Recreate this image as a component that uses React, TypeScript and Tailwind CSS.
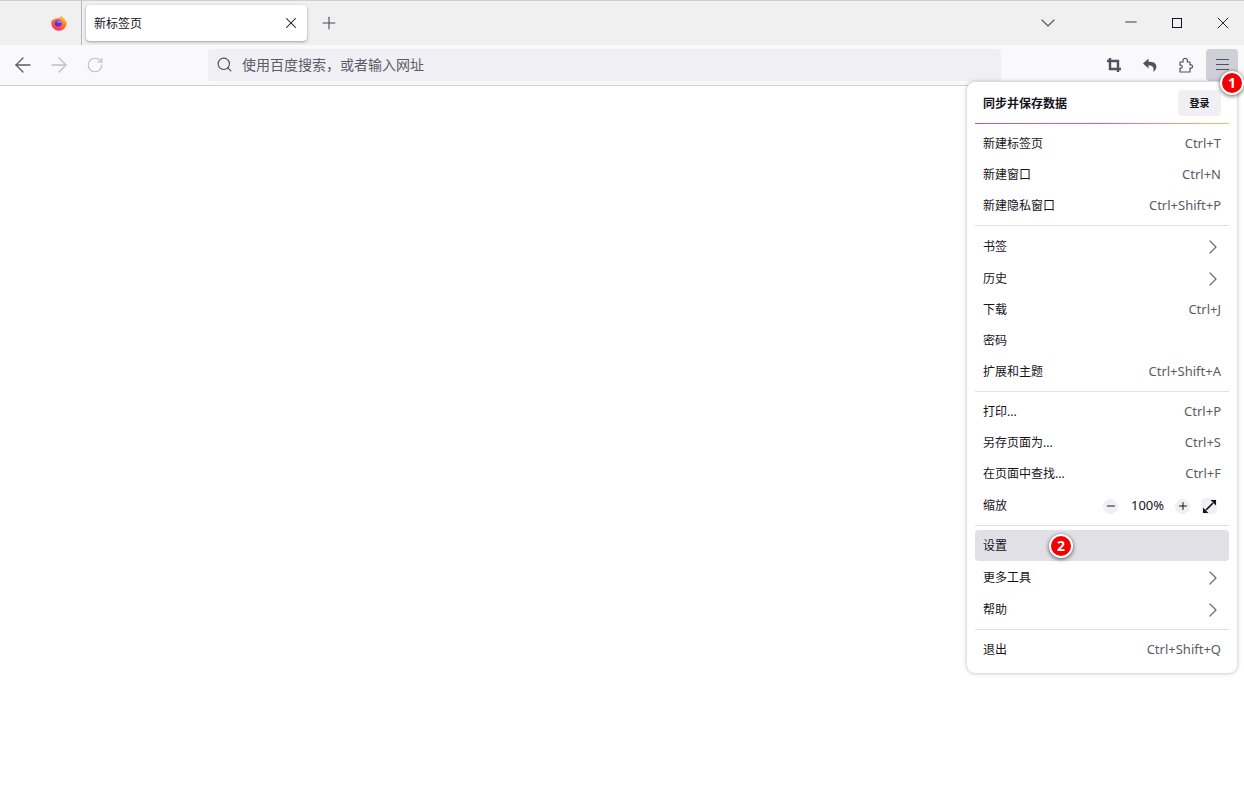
import { ArrowLeft, ArrowRight, ChevronDown, ChevronRight, Minus, Plus, RotateCw, Search, X } from "lucide-react";

const font = "[font-family:'Noto_Sans','Noto_Sans_CJK_SC',sans-serif]";

function Firefox() {
  return (
    <svg width="16" height="16" viewBox="0 0 16 16">
      <defs>
        <linearGradient id="ff" x1="0.8" y1="0" x2="0.3" y2="1">
          <stop offset="0" stopColor="#ffdc3c" />
          <stop offset="0.4" stopColor="#ff8a26" />
          <stop offset="1" stopColor="#f5246e" />
        </linearGradient>
        <linearGradient id="ffc" x1="0.7" y1="0" x2="0.3" y2="1">
          <stop offset="0" stopColor="#8a3fe0" />
          <stop offset="1" stopColor="#5a2bb8" />
        </linearGradient>
      </defs>
      <path d="M10.500 0.300c.2 1.500 1.700 2.200 2.900 3.600 1.300 1.400 2.300 2.900 2.300 4.300a7.700 7.700 0 1 1-15.300-1.300c.2-1 .5-1.800 1-2.500.2.400.3.700.4 1 .6-1 1.600-1.700 2.800-1.900 2.400-.4 5-.7 5.900-3.200z" fill="url(#ff)" />
      <circle cx="7.300" cy="8" r="3.600" fill="url(#ffc)" />
      <path d="M5 5.700h4.500c1 .7 1.400 1.500 1.400 2.300-1-.5-1.800-.6-2.900-.5z" fill="#c77dff" />
    </svg>
  );
}

function Crop() {
  return (
    <svg width="16" height="16" viewBox="0 0 16 16" fill="none" stroke="#52525e" strokeWidth="2.4">
      <path d="M4 1v11h11" />
      <path d="M1 4h11v11" />
    </svg>
  );
}

function Undo() {
  return (
    <svg width="16" height="16" viewBox="0 0 16 16">
      <path d="M6.500 1.500 1 6.500l5.500 5V8.300c2.600 0 4.400.6 5 3.200.2 1 .1 2.400-.3 3.500 2.700-2 3.600-4.500 3-6.800C13.500 5.500 10.500 4.600 6.500 4.700z" fill="#52525e" />
    </svg>
  );
}

function Puzzle() {
  return (
    <svg width="16" height="16" viewBox="0 0 16 16" fill="none" stroke="#52525e" strokeWidth="1.2" strokeLinejoin="round">
      <path d="M2 15v-4c1.300.4 2.200-.4 2.200-1.400S3.300 7.800 2 8.200V5h3.200c-.7-1.600 0-3.700 2-3.700s2.700 2.100 2 3.700H12v3c1.200-.6 2.500.1 2.500 1.500S13.200 11.700 12 11v4z" />
    </svg>
  );
}

function Sep() {
  return <div className="mx-2 my-[4px] h-px bg-[#e0e0e6]" />;
}

function Row({ label, right, sub, active }: { label: string; right?: string; sub?: boolean; active?: boolean }) {
  return (
    <div className={`mx-2 flex items-center justify-between rounded px-2 text-[12px] text-[#15141a] ${sub ? "h-[32px] pt-[2px]" : "h-[31px]"} ${active ? "bg-[#e0e0e6]" : ""}`}>
      <span>{label}</span>
      {right && <span className="text-[13px] text-[#5b5b66]">{right}</span>}
      {sub && <ChevronRight className="-mr-[4px] text-[#6b6b75]" size={24} strokeWidth={1.2} />}
    </div>
  );
}

function Badge({ n, className }: { n: number; className: string }) {
  return (
    <div className={`absolute flex h-[24px] w-[24px] items-center justify-center rounded-full border-[2px] border-white bg-[#f50000] text-[14px] font-bold leading-none text-white shadow-[0_1px_4px_rgba(0,0,0,0.65)] ${className}`}>
      {n}
    </div>
  );
}

export default function App() {
  return (
    <div className={`relative h-[787px] w-[1244px] overflow-hidden bg-white ${font}`}>
      {/* tab strip */}
      <div className="flex h-[45px] items-start border-t border-[#cfcfd1] bg-[#f0f0f1]">
        <div className="flex h-[44px] w-[82px] items-center justify-end border-r border-[#b8b8bc] pr-[14px]">
          <Firefox />
        </div>
        <div className="ml-1 mt-1 flex h-[36px] w-[221px] items-center justify-between rounded bg-white pl-2 pr-[7px] text-[12px] text-[#15141a] shadow-[0_1px_3px_rgba(0,0,0,0.35)]">
          <span className="pt-[2px]">新标签页</span>
          <X size={18} strokeWidth={1.4} className="text-[#15141a]" />
        </div>
        <div className="ml-[12px] mt-[12px] text-[#4a4a52]">
          <Plus size={20} strokeWidth={1.3} />
        </div>
        <div className="ml-[697px] mt-[10px] text-[#5b5b66]">
          <ChevronDown size={24} strokeWidth={1.2} />
        </div>
        <div className="ml-[62px] mt-[12px] text-[#15141a]">
          <Minus size={18} strokeWidth={1.1} />
        </div>
        <div className="ml-[32px] mt-[17px] h-[10px] w-[10px] border border-[#15141a]" />
        <div className="ml-[31px] mt-[12px] text-[#15141a]">
          <X size={20} strokeWidth={1.1} />
        </div>
      </div>

      {/* nav bar */}
      <div className="flex h-[41px] items-center border-b border-[#cfcfd8] bg-[#f9f9fb] pb-px">
        <ArrowLeft size={24} strokeWidth={1.3} className="ml-[11px] text-[#5b5b66]" />
        <ArrowRight size={24} strokeWidth={1.3} className="ml-[12px] text-[#bdbdc4]" />
        <RotateCw size={18} strokeWidth={1.5} className="ml-[15px] text-[#bdbdc4]" />
        <div className="ml-[104px] flex h-[32px] w-[793px] items-center rounded bg-[#f0f0f4] pl-2 text-[14px] text-[#5b5b66]">
          <Search size={17} strokeWidth={1.6} className="text-[#4a4a52]" />
          <span className="ml-[9px]">使用百度搜索，或者输入网址</span>
        </div>
        <div className="ml-[105px]"><Crop /></div>
        <div className="ml-[20px]"><Undo /></div>
        <div className="ml-[20px]"><Puzzle /></div>
        <div className="ml-[12px] flex h-[32px] w-[32px] items-center justify-center rounded bg-[#cfcfd8]">
          <div className="flex w-[13px] flex-col gap-[4px]">
            <div className="h-px bg-[#52525e]" />
            <div className="h-px bg-[#52525e]" />
            <div className="h-px bg-[#52525e]" />
          </div>
        </div>
      </div>

      {/* app menu */}
      <div className="absolute left-[967px] top-[82px] h-[591px] w-[270px] rounded-lg bg-white shadow-[0_0_4px_rgba(0,0,0,0.3)]">
        <div className="mx-2 mb-[7px] mt-[8px] flex h-[26px] items-center justify-between px-2 text-[12px] font-bold text-[#15141a]">
          <span className="pt-[2px]">同步并保存数据</span>
          <div className="flex h-[26px] w-[43px] items-center justify-center rounded bg-[#f0f0f4] text-[10px]">登录</div>
        </div>
        <div className="mx-2 h-px bg-gradient-to-r from-[#9059ff] via-[#ff4aa2] to-[#ffbd4f]" />
        <div className="mt-[4px]">
          <Row label="新建标签页" right="Ctrl+T" />
          <Row label="新建窗口" right="Ctrl+N" />
          <Row label="新建隐私窗口" right="Ctrl+Shift+P" />
        </div>
        <Sep />
        <Row label="书签" sub />
        <Row label="历史" sub />
        <Row label="下载" right="Ctrl+J" />
        <Row label="密码" />
        <Row label="扩展和主题" right="Ctrl+Shift+A" />
        <Sep />
        <Row label="打印..." right="Ctrl+P" />
        <Row label="另存页面为..." right="Ctrl+S" />
        <Row label="在页面中查找..." right="Ctrl+F" />
        <div className="mx-2 flex h-[32px] items-center pl-2 pr-3 pt-[2px] text-[12px] text-[#15141a]">
          <span>缩放</span>
          <div className="ml-auto flex h-[15px] w-[15px] items-center justify-center rounded-full bg-[#f0f0f4]">
            <Minus size={12} strokeWidth={2} />
          </div>
          <span className="ml-[13px] w-[33px] text-center text-[13px]">100%</span>
          <div className="ml-[11px] flex h-[15px] w-[15px] items-center justify-center rounded-full bg-[#f0f0f4]">
            <Plus size={12} strokeWidth={2} />
          </div>
          <div className="ml-[11px] flex h-[16px] w-[16px] items-center justify-center rounded-sm bg-[#f0f0f4]">
            <svg width="13" height="13" viewBox="0 0 13 13" fill="#15141a">
              <path d="M7.500 0H13v5.500zM0 7.500V13h5.500z" />
              <path d="M3 10l7-7" stroke="#15141a" strokeWidth="1.7" />
            </svg>
          </div>
        </div>
        <Sep />
        <Row label="设置" active />
        <Row label="更多工具" sub />
        <Row label="帮助" sub />
        <Sep />
        <Row label="退出" right="Ctrl+Shift+Q" />
      </div>

      <Badge n={1} className="left-[1220px] top-[71px]" />
      <Badge n={2} className="left-[1049px] top-[534px]" />
    </div>
  );
}
